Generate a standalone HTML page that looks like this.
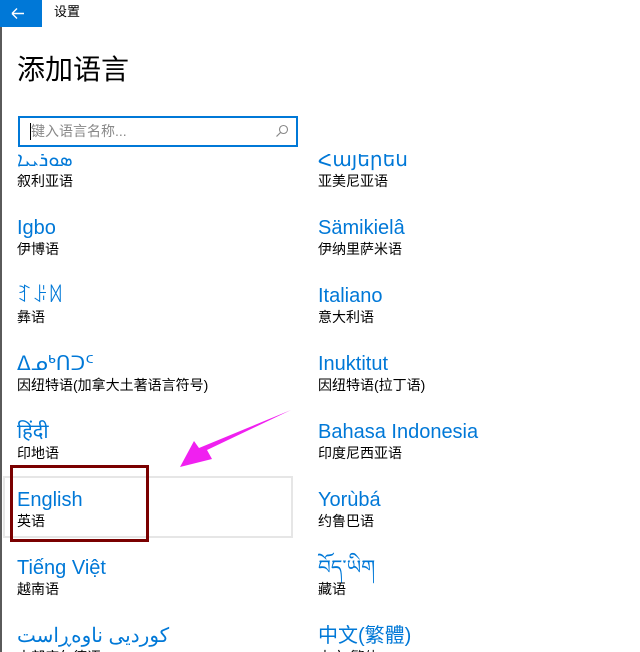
<!DOCTYPE html>
<html><head><meta charset="utf-8"><style>
body{margin:0;width:640px;height:652px;background:#fff;position:relative;overflow:hidden;font-family:"Liberation Sans","Noto Sans CJK SC",sans-serif}
.lb{position:absolute;left:0;top:0;width:2px;height:652px;background:#5a5a5a}
.back{position:absolute;left:0;top:0;width:42px;height:27px;background:#0078d7}
.t{position:absolute;color:#000}
.list{position:absolute;left:0;top:154px;width:640px;height:498px;overflow:hidden}
.n{position:absolute;font-size:20px;line-height:24px;color:#0078d7;white-space:nowrap}
.s{position:absolute;font-size:14px;line-height:16px;color:#000;white-space:nowrap}
</style></head><body>
<div class="lb"></div>
<div class="back"><svg width="42" height="27"><path d="M12 13.5H24M12 13.5L17 8.5M12 13.5L17 18.5" stroke="#fff" stroke-width="1.4" fill="none"/></svg></div>
<div class="t" style="left:54px;top:4px;font-size:13px;line-height:16px">设置</div>
<div class="t" style="left:17px;top:52px;font-size:28px;line-height:36px">添加语言</div>
<div style="position:absolute;left:18px;top:116px;width:280px;height:31px;box-sizing:border-box;border:2px solid #0078d7"></div>
<div style="position:absolute;left:30px;top:123px;width:1px;height:17px;background:#000"></div>
<div class="t" style="left:31px;top:123px;font-size:14px;line-height:17px;color:#888">键入语言名称...</div>
<svg style="position:absolute;left:275px;top:124px" width="14" height="14"><circle cx="8.5" cy="5.5" r="4" stroke="#888" fill="none" stroke-width="1.1"/><path d="M5.5 8.5L1.5 12.5" stroke="#888" stroke-width="1.2"/></svg>
<div class="list">
<div style="position:absolute;left:3px;top:322px;width:290px;height:62px;box-sizing:border-box;border:2px solid #e6e6e6"></div>
<div class="n" style="left:17px;top:-6px">ܣܘܪܝܝܐ</div><div class="s" style="left:17px;top:19px">叙利亚语</div>
<div class="n" style="left:318px;top:-6px">Հայերեն</div><div class="s" style="left:318px;top:19px">亚美尼亚语</div>
<div class="n" style="left:17px;top:62px">Igbo</div><div class="s" style="left:17px;top:87px">伊博语</div>
<div class="n" style="left:318px;top:62px">Sämikielâ</div><div class="s" style="left:318px;top:87px">伊纳里萨米语</div>
<div class="n" style="left:17px;top:130px">ꆈꌠꉙ</div><div class="s" style="left:17px;top:155px">彝语</div>
<div class="n" style="left:318px;top:130px">Italiano</div><div class="s" style="left:318px;top:155px">意大利语</div>
<div class="n" style="left:17px;top:198px">ᐃᓄᒃᑎᑐᑦ</div><div class="s" style="left:17px;top:223px">因纽特语(加拿大土著语言符号)</div>
<div class="n" style="left:318px;top:198px">Inuktitut</div><div class="s" style="left:318px;top:223px">因纽特语(拉丁语)</div>
<div class="n" style="left:17px;top:266px">हिंदी</div><div class="s" style="left:17px;top:291px">印地语</div>
<div class="n" style="left:318px;top:266px">Bahasa Indonesia</div><div class="s" style="left:318px;top:291px">印度尼西亚语</div>
<div class="n" style="left:17px;top:334px">English</div><div class="s" style="left:17px;top:359px">英语</div>
<div class="n" style="left:318px;top:334px">Yorùbá</div><div class="s" style="left:318px;top:359px">约鲁巴语</div>
<div class="n" style="left:17px;top:402px">Tiếng Việt</div><div class="s" style="left:17px;top:427px">越南语</div>
<div class="n" style="left:318px;top:402px">བོད་ཡིག</div><div class="s" style="left:318px;top:427px">藏语</div>
<div class="n" style="left:17px;top:470px">کوردیی ناوەڕاست</div><div class="s" style="left:17px;top:495px">中部库尔德语</div>
<div class="n" style="left:318px;top:470px">中文(繁體)</div><div class="s" style="left:318px;top:495px">中文(繁体)</div>
</div>
<div style="position:absolute;left:10px;top:465px;width:139px;height:77px;box-sizing:border-box;border:3px solid #7a0000"></div>
<svg style="position:absolute;left:0;top:0" width="640" height="652"><path d="M291 410L207 450L212 459L180 467L194 441L199 448Z" fill="#f020f0"/></svg>
</body></html>
